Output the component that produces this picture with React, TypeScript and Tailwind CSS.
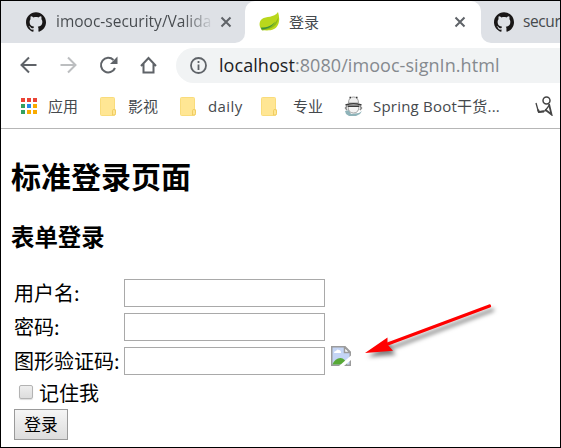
import { SiGithub } from "react-icons/si";

const UI = "font-['Open_Sans','Noto_Sans_CJK_SC',sans-serif]";
const CJK = "font-['Noto_Sans_CJK_SC',sans-serif]";

function Close() {
  return (
    <svg width="12" height="12" viewBox="0 0 12 12" className="shrink-0" stroke="#5f6368" strokeWidth="2">
      <path d="M1.500 1.500l9 9M10.500 1.500l-9 9" />
    </svg>
  );
}

function Leaf() {
  return (
    <svg width="21" height="20" viewBox="0 0 21 20" className="shrink-0">
      <path d="M19 0C21 6 21 14 15 17C11 19 6 18.500 3 18C-.5 15 0 9 3 7C7 4 15 6 19 0Z" fill="#b9d71c" />
      <path d="M19.500 5C19 13 14 17 3 18.500L2.500 16.500C11 16 16 13 19.500 5Z" fill="#8dbb18" />
      <path d="M2 15.500C9 15.500 13 13.500 16 9.500C14 14.500 9 17 2.500 17.500Z" fill="#3b9140" />
    </svg>
  );
}

function Folder() {
  return (
    <svg width="17" height="19" viewBox="0 0 17 19" className="shrink-0">
      <path d="M1.500 .5H13.500Q14.500 .5 14.500 1.500V12L15.500 13V16.500Q15.500 18.500 13.500 18.500H1.500Q.5 18.500 .5 17.500V1.500Q.5 .5 1.500 .5Z" fill="#ffe694" stroke="#f9dc7c" />
      <path d="M12.500 18V13.500Q12.500 12.500 14 12.500T15.500 14V16.500Q15.500 18 14 18Z" fill="#ffe694" stroke="#f0cd62" />
    </svg>
  );
}

function Apps() {
  const colors = ["#ea4335", "#ea4335", "#ea4335", "#34a060", "#2389ed", "#f9ab00", "#34a060", "#f9ab00", "#f9ab00"];
  return (
    <div className="grid w-4 shrink-0 grid-cols-3 gap-[2px]">
      {colors.map((c, i) => (
        <span key={i} className="size-1" style={{ backgroundColor: c }} />
      ))}
    </div>
  );
}

function Robot() {
  return (
    <svg width="20" height="20" viewBox="0 0 20 20" className="shrink-0">
      <path d="M1 15L5 14L7 18L15 17L18 15L16 18L12 20H5L2 18Z" fill="#8fb3b9" />
      <path d="M3.500 9.500L1.500 12L3 14M15.500 9.500L17.500 12L16 14" fill="none" stroke="#888" strokeWidth="1.500" />
      <path d="M4 10H15Q15 17 9.500 17T4 10Z" fill="#f4f4f4" stroke="#a5a5a5" />
      <path d="M4.500 7Q4.500 1 9.500 1T14.500 7Z" fill="#eee" stroke="#a0a0a0" />
      <path d="M1.500 9Q9.500 6.500 17.500 9M4 10.300H15" fill="none" stroke="#3c3c3c" strokeWidth="1.500" />
      <path d="M5.500 1.500H7M12 1.500H13.500" stroke="#333" strokeWidth="1.500" />
    </svg>
  );
}

function Broken() {
  return (
    <svg width="20" height="20" viewBox="0 0 20 20" className="shrink-0">
      <path d="M.75 .75H14L19.250 6V19.250H.75Z" fill="#c4d5f5" stroke="#9b9b9b" strokeWidth="1.500" />
      <path d="M3 7Q3 5 5 5Q6 2.500 8 4Q10 4 10 7Z" fill="#fff" />
      <path d="M1.500 18.500Q4 12 9.500 12Q14 12 16 18.500Z" fill="#57a936" />
      <path d="M13.500 1V6.500H19Z" fill="#fff" stroke="#9b9b9b" strokeWidth="1.500" />
      <path d="M8 20L20 9.500V14L13 20Z" fill="#fff" />
    </svg>
  );
}

function Field({ label, captcha }: { label: string; captcha?: boolean }) {
  return (
    <div className="flex h-[34px] items-center">
      <label className="w-[110px] shrink-0 whitespace-nowrap text-[20px] leading-7">{label}</label>
      <input className="h-7 w-[201px] border border-[#a9a9a9] bg-white outline-none" />
      {captcha && <div className="ml-[6px] mb-[10px]"><Broken /></div>}
    </div>
  );
}

export default function App() {
  return (
    <div className="relative flex h-[448px] w-[561px] flex-col overflow-hidden border border-black bg-white text-black">
      <div className={`flex h-[42px] shrink-0 text-[15.500px] text-[#45494d] ${UI}`}>
        <div className="flex w-[244px] shrink-0 items-center rounded-br-[10px] bg-[#dee1e6] pl-[25px]">
          <SiGithub size={20} color="#191717" className="shrink-0" />
          <span className="ml-[10px] w-[158px] overflow-hidden whitespace-nowrap bg-gradient-to-r from-[#45494d] from-80% to-[#dee1e6] to-100% bg-clip-text text-transparent">imooc-security/Valida</span>
          <span className="ml-[6px]"><Close /></span>
        </div>
        <div className="w-[236px] shrink-0 bg-[#dee1e6]">
          <div className="flex h-full items-center rounded-t-[10px] bg-white pl-[14px] pr-[15px]">
            <Leaf />
            <span className="ml-[9px] flex-1 text-[15px]">登录</span>
            <Close />
          </div>
        </div>
        <div className="flex flex-1 items-center overflow-hidden rounded-bl-[10px] bg-[#dee1e6] pl-[13px]">
          <SiGithub size={20} color="#191717" className="shrink-0" />
          <span className="ml-[9px] whitespace-nowrap tracking-[-0.4px]">secur</span>
        </div>
      </div>

      <div className="flex h-[44px] shrink-0 items-center pl-[19px]">
        <svg width="138" height="20" viewBox="0 0 138 20" fill="none" stroke="#5f6368" strokeWidth="2" className="shrink-0">
          <path d="M16.500 10H1.500M9 2.500L1.500 10l7.500 7.500" />
          <path d="M40.500 10H55.500M48 2.500L55.500 10l-7.500 7.500" stroke="#bcbec0" />
          <path d="M95 13A7.300 7.300 0 1 1 93.500 5" />
          <path d="M97.500 1.500V9H90Z" fill="#5f6368" stroke="none" />
          <path d="M121 11L128.500 3L136 11M123.500 9V17.500H133.500V9" />
        </svg>
        <div className={`ml-[18px] flex h-[35px] flex-1 items-center rounded-l-full bg-[#f1f3f4] pl-[14px] text-[18px] tracking-[0.06px] text-[#858a8f] ${UI}`}>
          <svg width="17" height="17" viewBox="0 0 17 17" fill="none" stroke="#5f6368" strokeWidth="1.800" className="shrink-0">
            <circle cx="8.500" cy="8.500" r="7.500" />
            <path d="M8.500 7.500V13M8.500 4V6" />
          </svg>
          <span className="ml-[12px] whitespace-nowrap"><span className="text-[#202124]">localhost</span>:8080/imooc-signIn.html</span>
        </div>
      </div>

      <div className={`flex h-[42px] shrink-0 items-center border-b border-[#b6b6b6] pb-[3px] pl-[20px] text-[15px] text-[#45494d] ${UI}`}>
        <Apps />
        <span className="ml-[11px] w-[52px] shrink-0">应用</span>
        <Folder />
        <span className="ml-[11px] w-[52px] shrink-0">影视</span>
        <Folder />
        <span className="ml-[11px] w-[53px] shrink-0 tracking-[0.4px]">daily</span>
        <Folder />
        <span className="ml-[15px] w-[51px] shrink-0">专业</span>
        <Robot />
        <span className="ml-[9px] w-[162px] shrink-0 whitespace-nowrap tracking-[0.22px]">Spring Boot干货...</span>
        <svg width="18" height="20" viewBox="0 0 18 20" fill="none" stroke="#444" className="shrink-0">
          <circle cx="11.500" cy="4.500" r="3.500" strokeWidth="1.500" />
          <path d="M1 7L3.500 16L10 15L14.500 9" strokeWidth="1.300" />
          <path d="M3 13.500L4 16L9 15.500" strokeWidth="2" />
          <path d="M14 8L16.500 18.500L10 13.500" strokeWidth="1.800" />
        </svg>
      </div>

      <main className={`flex flex-1 flex-col pl-[10px] ${CJK}`}>
        <h1 className="mt-[26px] h-10 text-[30px] leading-10 font-bold">标准登录页面</h1>
        <h2 className="mt-[25px] h-8 text-[23.400px] leading-8 font-bold">表单登录</h2>
        <form className="mt-[24px] pl-[3px]">
          <Field label="用户名:" />
          <Field label="密码:" />
          <Field label="图形验证码:" captcha />
          <label className="flex h-[30px] items-center pl-[5px] text-[20px] leading-7">
            <input type="checkbox" className="mr-[6px] mb-[3px] size-[14px] appearance-none rounded-[2px] border border-[#b3b3b3] bg-gradient-to-b from-[#eeeeee] to-[#dddddd] shadow-[0_1px_1px_#ddd]" />
            记住我
          </label>
          <button type="button" className="mt-[1px] flex h-[31px] w-[54px] items-center justify-center border border-[#9a9a9a] bg-gradient-to-b from-[#f5f5f5] to-[#dddddd] text-[16.700px]">登录</button>
        </form>
      </main>

      <svg width="150" height="70" viewBox="0 0 150 70" className="absolute left-[354px] top-[294px] drop-shadow-[3px_4px_2px_rgba(0,0,0,0.5)]">
        <path d="M134.500 11L30 50" stroke="#f00" strokeWidth="3.200" strokeLinecap="round" />
        <path d="M10 58L32.500 42.500L32.500 49.500L38 55.800Z" fill="#f00" />
      </svg>
    </div>
  );
}
